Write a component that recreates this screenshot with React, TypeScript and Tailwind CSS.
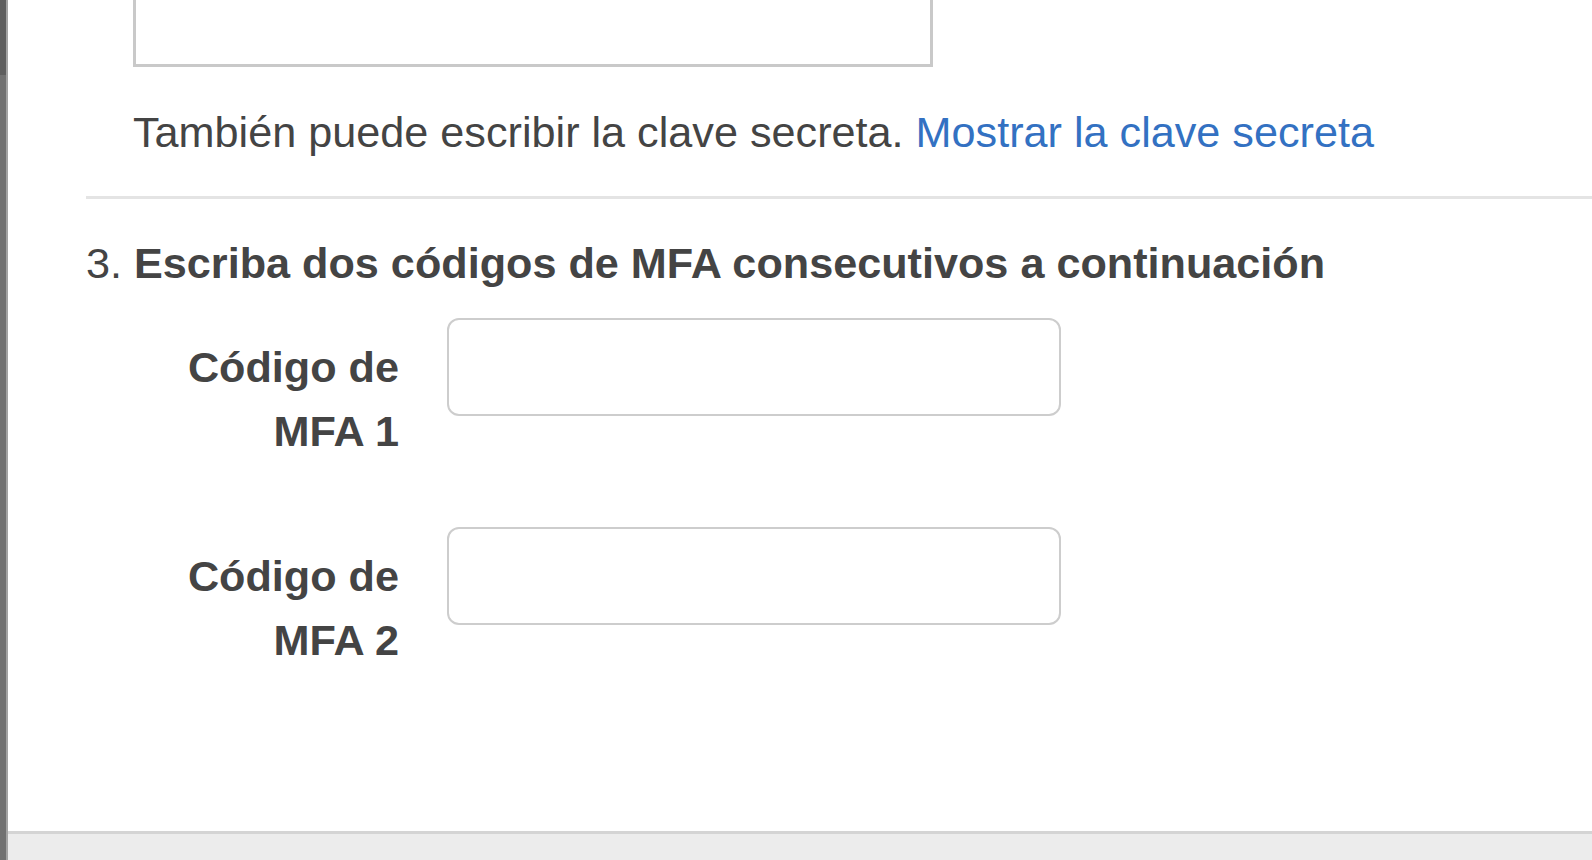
export default function App() {
  return (
    <div className="flex h-[860px] w-full overflow-hidden bg-white font-['Liberation_Sans',Arial,sans-serif] text-[43.2px] text-[#444]">
      {/* left window edge */}
      <div className="flex w-[8px] flex-col border-r-2 border-[#a3a3a3]">
        <div className="h-[75px] bg-[#5e5e5e]" />
        <div className="flex-1 bg-[#717171]" />
      </div>

      <div className="flex flex-1 flex-col">
        <div className="flex-1 pl-[78px]">
          <div className="pl-[47px]">
            <div className="h-[67px] w-[800px] border-x-[3px] border-b-[3px] border-[#c9c9c9] bg-white" />
            <p className="mt-[35px] leading-[60px]">
              También puede escribir la clave secreta.{' '}
              <a href="#" className="text-[#3371c2]">
                Mostrar la clave secreta
              </a>
            </p>
          </div>

          <div className="mt-[34px] h-[3px] bg-[#e4e4e4]" />

          <div className="mt-[34px] leading-[60px]">
            3. <strong className="font-bold">Escriba dos códigos de MFA consecutivos a continuación</strong>
          </div>

          <div className="mt-[25px] flex flex-col gap-[64px] pl-[47px]">
            {[1, 2].map((n) => (
              <div key={n} className="flex items-start">
                <label className="mt-[17px] w-[266px] text-right font-bold leading-[64px]">
                  Código de MFA {n}
                </label>
                <input
                  type="text"
                  className="ml-[48px] h-[98px] w-[614px] rounded-[12px] border-2 border-[#cdcdcd] bg-white px-4 outline-none"
                />
              </div>
            ))}
          </div>
        </div>

        <div className="h-[29px] border-t-[3px] border-[#d4d4d4] bg-[#ececec]" />
      </div>
    </div>
  );
}
